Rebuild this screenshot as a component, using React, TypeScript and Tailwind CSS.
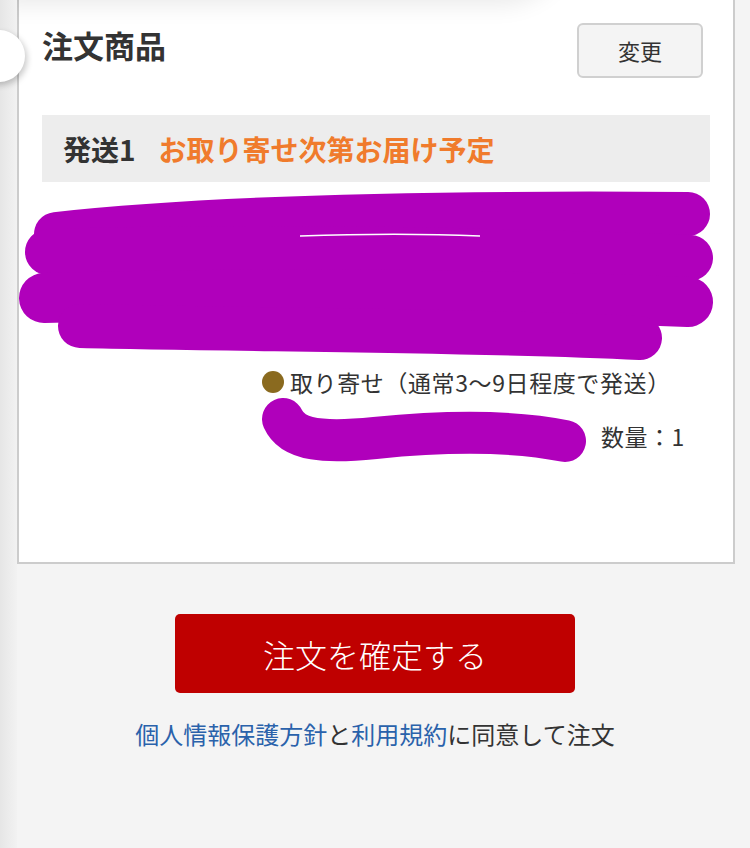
import React from 'react';

const FONT = "font-['Hiragino_Sans','Noto_Sans_CJK_JP','Noto_Sans',sans-serif]";

function Redaction() {
    // 塗りつぶし（大）
    return (
        <svg viewBox="19 190 712 172" className="block h-[172px] w-[712px]" aria-hidden>
            <g fill="none" stroke="#b000bb" strokeLinecap="round" strokeLinejoin="round">
                <path d="M56 234 C 200 218, 420 212, 688 214" strokeWidth="44" />
                <path d="M48 252 C 250 246, 480 250, 690 258" strokeWidth="46" />
                <path d="M44 298 C 250 292, 480 294, 688 302" strokeWidth="50" />
                <path d="M80 326 C 250 330, 480 330, 640 338" strokeWidth="44" />
            </g>
            <path d="M300 236 C 360 234, 430 234, 480 236" stroke="#ffffff" strokeWidth="1.5" fill="none" />
        </svg>
    );
}

function SmallRedaction() {
    return (
        <svg viewBox="250 398 340 72" className="block h-[72px] w-[340px]" aria-hidden>
            <path
                d="M278 420 C 288 442, 320 444, 370 439 C 430 433, 500 430, 560 442"
                fill="none"
                stroke="#b000bb"
                strokeWidth="42"
                strokeLinecap="round"
                strokeLinejoin="round"
            />
        </svg>
    );
}

export default function App() {
    return (
        <div className={`relative h-[848px] w-[750px] overflow-hidden bg-[#f4f4f4] text-[#333333] ${FONT}`}>
            {/* カード */}
            <div className="ml-[17px] mr-[15px] border-2 border-t-0 border-[#cccccc] bg-white px-[23px] pb-[93px] pt-[23px]">
                <div className="flex items-start justify-between">
                    <h2 className="pt-[1px] text-[31px] font-bold leading-[42px]">注文商品</h2>
                    <button className="mr-[7px] h-[55px] w-[126px] rounded-[6px] border-2 border-[#d0d0d0] bg-[#f4f4f4] text-[22px] text-[#333333]">
                        変更
                    </button>
                </div>

                <div className="mt-[37px] flex h-[67px] items-center gap-[23px] bg-[#ededed] pl-[21px] text-[28px] font-bold">
                    <span className="text-[#333333]">発送1</span>
                    <span className="text-[#f07b2c]">お取り寄せ次第お届け予定</span>
                </div>

                <div className="-mx-[23px] mt-[8px]">
                    <Redaction />
                </div>

                <div className="mt-[5px] flex items-center pl-[220px] text-[23px] leading-[30px] tracking-[0.6px]">
                    <span className="mr-[6px] inline-block h-[22px] w-[22px] rounded-full bg-[#8a6a1f]" />
                    <span>取り寄せ（通常3〜9日程度で発送）</span>
                </div>

                <div className="flex items-center">
                    <div className="ml-[213px]">
                        <SmallRedaction />
                    </div>
                    <span className="ml-[6px] pt-[6px] text-[23px] tracking-[0.5px]">数量：1</span>
                </div>
            </div>

            {/* 注文確定 */}
            <div className="mt-[50px] flex flex-col items-center">
                <button className="h-[79px] w-[400px] rounded-[5px] bg-[#bf0000] text-[32px] font-light text-white">
                    注文を確定する
                </button>
                <p className="mt-[24px] text-[24px] leading-[34px]">
                    <span className="text-[#2a62ab]">個人情報保護方針</span>
                    <span>と</span>
                    <span className="text-[#2a62ab]">利用規約</span>
                    <span>に同意して注文</span>
                </p>
            </div>

            {/* 上部の影 */}
            <div className="pointer-events-none absolute left-0 top-[-70px] h-[70px] w-[570px] rounded-br-[70px] bg-[#eeeeee] shadow-[0_4px_24px_rgba(0,0,0,0.09)]" />
            {/* 左端のハンドル */}
            <div className="pointer-events-none absolute left-0 top-0 h-full w-[17px] bg-gradient-to-r from-[#e6e6e6] to-[#f2f2f2]" />
            <div className="pointer-events-none absolute left-[-27px] top-[30px] h-[52px] w-[52px] rounded-full bg-white shadow-[2px_3px_6px_rgba(0,0,0,0.22)]" />
        </div>
    );
}
